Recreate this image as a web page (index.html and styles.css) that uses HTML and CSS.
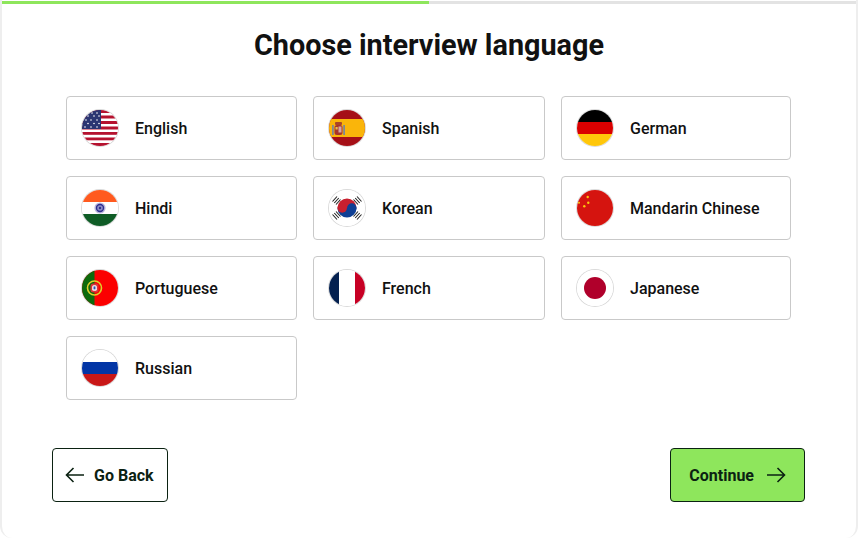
FILE: index.html
```html
<!DOCTYPE html>
<html lang="en">
<head>
    <meta charset="UTF-8">
    <meta name="viewport" content="width=device-width, initial-scale=1.0">
    <title>Choose interview language</title>
    <link rel="stylesheet" href="styles.css">
</head>
<body>
    <div class="page">
        <div class="progress"><div class="progress-fill"></div></div>
        <h1>Choose interview language</h1>

        <div class="languages">
            <div class="language">
                <svg class="flag" viewBox="0 0 36 36">
                    <rect width="36" height="36" fill="#fff"/>
                    <g fill="#b5122f">
                        <rect y="0" width="36" height="3"/>
                        <rect y="5.5" width="36" height="3"/>
                        <rect y="11" width="36" height="3"/>
                        <rect y="16.5" width="36" height="3"/>
                        <rect y="22" width="36" height="2.8"/>
                        <rect y="27.5" width="36" height="2.8"/>
                        <rect y="33" width="36" height="3"/>
                    </g>
                    <rect width="19" height="19" fill="#2b3572"/>
                    <g fill="#fff">
                        <circle cx="10" cy="3" r=".8"/><circle cx="15" cy="3" r=".8"/>
                        <circle cx="6" cy="6" r=".8"/><circle cx="12" cy="6" r=".8"/><circle cx="17" cy="6" r=".8"/>
                        <circle cx="4" cy="10" r=".8"/><circle cx="9" cy="10" r=".8"/><circle cx="15" cy="10" r=".8"/>
                        <circle cx="6" cy="13.5" r=".8"/><circle cx="12" cy="13.5" r=".8"/><circle cx="17" cy="13.5" r=".8"/>
                        <circle cx="3" cy="17" r=".8"/><circle cx="9" cy="17" r=".8"/><circle cx="15" cy="17" r=".8"/>
                    </g>
                </svg>
                <span>English</span>
            </div>
            <div class="language">
                <svg class="flag" viewBox="0 0 36 36">
                    <rect width="36" height="36" fill="#a50f17"/>
                    <rect y="9" width="36" height="18" fill="#fab50a"/>
                    <rect x="3" y="15" width="1.8" height="10" fill="#7f8794"/>
                    <rect x="14.2" y="15" width="1.8" height="10" fill="#7f8794"/>
                    <rect x="5.5" y="15" width="8" height="10" rx="2.5" fill="#a8342a"/>
                    <rect x="9.5" y="16.5" width="3" height="6" fill="#d8a9a5"/>
                    <rect x="6.5" y="17" width="2.2" height="2.5" fill="#e8c04a"/>
                    <rect x="6" y="12" width="7" height="3" rx="1" fill="#a8452a"/>
                </svg>
                <span>Spanish</span>
            </div>
            <div class="language">
                <svg class="flag" viewBox="0 0 36 36">
                    <rect width="36" height="12" fill="#000"/>
                    <rect y="12" width="36" height="12" fill="#d90000"/>
                    <rect y="24" width="36" height="12" fill="#ffc70a"/>
                </svg>
                <span>German</span>
            </div>

            <div class="language">
                <svg class="flag" viewBox="0 0 36 36">
                    <rect width="36" height="12" fill="#ff5a1f"/>
                    <rect y="12" width="36" height="12" fill="#fff"/>
                    <rect y="24" width="36" height="12" fill="#0f5c26"/>
                    <circle cx="18" cy="18" r="5.6" fill="#b9b6dc"/>
                    <circle cx="18" cy="18" r="4.2" fill="#2f2f8f"/>
                    <circle cx="18" cy="18" r="2.8" fill="#8f8ec8"/>
                    <circle cx="18" cy="18" r="1.2" fill="#2f2f8f"/>
                </svg>
                <span>Hindi</span>
            </div>
            <div class="language">
                <svg class="flag" viewBox="0 0 36 36">
                    <rect width="36" height="36" fill="#fff"/>
                    <path d="M8.5 18a9.5 9.5 0 0 1 19 0z" fill="#c8202f"/>
                    <path d="M8.5 18a9.5 9.5 0 0 0 19 0z" fill="#0f3f94"/>
                    <circle cx="13.2" cy="18" r="4.75" fill="#c8202f"/>
                    <circle cx="22.8" cy="18" r="4.75" fill="#0f3f94"/>
                    <g stroke="#222" stroke-width="1.1">
                        <path d="M3.5 11.5l4.5-5M5.3 13l4.5-5M7 14.5l4.5-5"/>
                        <path d="M28 6.5l4.5 5M26.2 8l4.5 5M24.5 9.5l4.5 5"/>
                        <path d="M3.5 24.5l4.5 5M5.3 23l4.5 5M7 21.5l4.5 5"/>
                        <path d="M28 29.5l4.5-5M26.2 28l4.5-5M24.5 26.5l4.5-5"/>
                    </g>
                </svg>
                <span>Korean</span>
            </div>
            <div class="language">
                <svg class="flag" viewBox="0 0 36 36">
                    <rect width="36" height="36" fill="#d5140f"/>
                    <g fill="#fbc70f">
                        <circle cx="2" cy="12.7" r="1"/>
                        <circle cx="10.7" cy="7" r="1.2"/>
                        <circle cx="11.3" cy="12.7" r="1.2"/>
                        <circle cx="7.3" cy="16.3" r="1.2"/>
                    </g>
                </svg>
                <span>Mandarin Chinese</span>
            </div>

            <div class="language">
                <svg class="flag" viewBox="0 0 36 36">
                    <rect width="36" height="36" fill="#fb0000"/>
                    <rect width="12.5" height="36" fill="#0c6a0c"/>
                    <circle cx="12.5" cy="18" r="7" fill="none" stroke="#dccf2a" stroke-width="1.6"/>
                    <rect x="8.5" y="13.5" width="8" height="9" rx="2.5" fill="#d8343a"/>
                    <rect x="10.2" y="15.2" width="4.6" height="5.6" rx="1.5" fill="#fff"/>
                    <rect x="11.5" y="16.4" width="2" height="3" fill="#2f4fb0"/>
                </svg>
                <span>Portuguese</span>
            </div>
            <div class="language">
                <svg class="flag" viewBox="0 0 36 36">
                    <rect width="36" height="36" fill="#fff"/>
                    <rect width="10" height="36" fill="#04204f"/>
                    <rect x="26" width="10" height="36" fill="#c70024"/>
                </svg>
                <span>French</span>
            </div>
            <div class="language">
                <svg class="flag" viewBox="0 0 36 36">
                    <rect width="36" height="36" fill="#fff"/>
                    <circle cx="18" cy="18" r="11" fill="#b0002b"/>
                </svg>
                <span>Japanese</span>
            </div>

            <div class="language">
                <svg class="flag" viewBox="0 0 36 36">
                    <rect width="36" height="12" fill="#fff"/>
                    <rect y="12" width="36" height="12" fill="#0235a5"/>
                    <rect y="24" width="36" height="12" fill="#c81717"/>
                </svg>
                <span>Russian</span>
            </div>
        </div>

        <div class="actions">
            <button class="btn btn-back">
                <svg class="arrow" viewBox="0 0 20 16"><path d="M19 8H1.5M8.5 1L1.5 8l7 7"/></svg>
                Go Back
            </button>
            <button class="btn btn-primary">
                Continue
                <svg class="arrow" viewBox="0 0 20 16"><path d="M1 8h17.5M11.5 1l7 7-7 7"/></svg>
            </button>
        </div>
    </div>
</body>
</html>
```

FILE: styles.css
```css
html, body {
    margin: 0;
    height: 100%;
    overflow: hidden;
    background-color: #fff;
}
body {
    font-family: Roboto, Inter, Arial, sans-serif;
    color: #111;
}
.page {
    box-sizing: border-box;
    width: 858px;
    height: 538px;
    border: 2px solid #eee;
    border-top: none;
    border-bottom: none;
    border-radius: 0 0 12px 12px;
    padding-top: 1px;
}
.progress {
    height: 3px;
    background-color: #e3e3e3;
}
.progress-fill {
    width: 427px;
    height: 3px;
    background-color: #8ee65c;
}
h1 {
    margin: 23px 0 0;
    font-size: 28.8px;
    line-height: 36px;
    font-weight: 700;
    text-align: center;
}
.languages {
    display: grid;
    grid-template-columns: 231px 232px 230px;
    grid-auto-rows: 64px;
    gap: 16px;
    margin: 33px 0 0 64px;
}
.language {
    display: flex;
    align-items: center;
    gap: 17px;
    box-sizing: border-box;
    padding: 0 15px;
    border: 1px solid #c9c9c9;
    border-radius: 4px;
    background: #fff;
    font-size: 16px;
    font-weight: 500;
    cursor: pointer;
}
.flag {
    flex: none;
    width: 36px;
    height: 36px;
    border-radius: 50%;
    box-shadow: 0 0 0 1px #dadada;
}
.actions {
    display: flex;
    justify-content: space-between;
    margin: 48px 51px 0 50px;
}
.btn {
    display: flex;
    align-items: center;
    box-sizing: border-box;
    height: 54px;
    border: 1px solid #0b2212;
    border-radius: 4px;
    background-color: #fff;
    color: #0b2212;
    font-family: inherit;
    font-size: 16px;
    font-weight: 700;
    cursor: pointer;
}
.btn-back {
    gap: 9px;
    padding: 0 13px 0 12px;
}
.btn-primary {
    gap: 12px;
    padding: 0 18px;
    background-color: #8ee65c;
}
.arrow {
    width: 20px;
    height: 16px;
    fill: none;
    stroke: #0b2212;
    stroke-width: 1.6;
}
```
